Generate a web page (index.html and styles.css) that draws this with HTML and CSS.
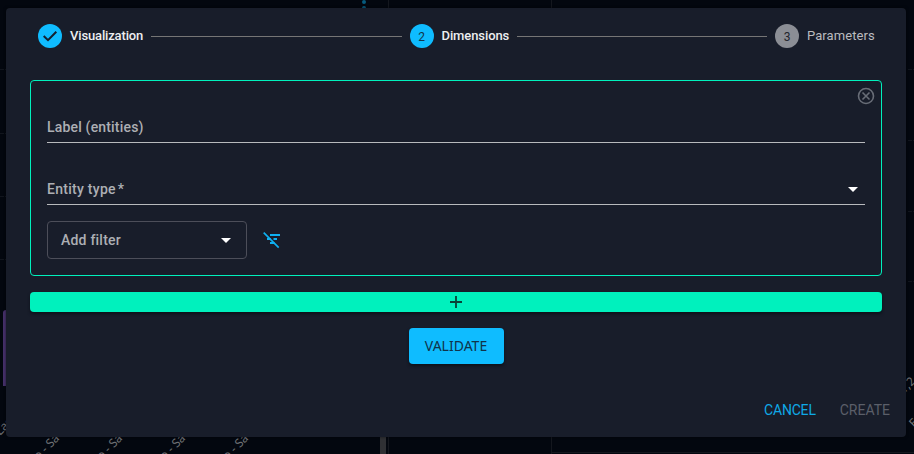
FILE: index.html
```
<!DOCTYPE html>
<html lang="en">
<head>
<meta charset="utf-8">
<title>Create widget</title>
<link rel="stylesheet" href="styles.css">
</head>
<body>
<div class="backdrop">
  <svg width="914" height="454" viewBox="0 0 914 454">
    <path d="M388.500 0V454M551.500 0V454M551 452.500H914" stroke="#14171e" fill="none"/>
    <path d="M0 69.500H6M0 133.500H6M0 196.500H6M0 259.500H6M908 69.500H914M908 140.500H914M908 211.500H914M908 281.500H914" stroke="#11151d" stroke-dasharray="4 1"/>
    <circle cx="364" cy="2" r="2" fill="#075a7d"/><circle cx="364" cy="8" r="2" fill="#075a7d"/>
    <path d="M3 386V313q0-3 3-3h3V386Z" fill="#46306b"/>
    <rect x="380" y="430" width="6" height="24" fill="#2f3034"/>
    <g class="axis">
      <text transform="translate(0 436) rotate(-45)">Las</text>
      <text transform="translate(34 465) rotate(-45)">llo - Sa</text>
      <text transform="translate(97 465) rotate(-45)">llo - Sa</text>
      <text transform="translate(160 465) rotate(-45)">llo - Sa</text>
      <text transform="translate(223 465) rotate(-45)">llo - Sa</text>
      <text transform="translate(904 394) rotate(-45)">1,2</text>
      <text transform="translate(914 428) rotate(-45)">E</text>
    </g>
  </svg>
</div>
<main class="dialog">
  <div class="stepper">
    <div class="step"><span class="dot"><svg width="24" height="24" viewBox="0 0 24 24"><path d="M5.700 12l4.300 4.100 8.300-8.400" fill="none" stroke="#14202e" stroke-width="2"/></svg></span><span class="step-label w1">Visualization</span></div>
    <i class="line"></i>
    <div class="step"><span class="dot">2</span><span class="step-label w2">Dimensions</span></div>
    <i class="line"></i>
    <div class="step idle"><span class="dot">3</span><span class="step-label w3">Parameters</span></div>
  </div>
  <section class="card">
    <button class="close" aria-label="Remove"><svg width="18" height="18" viewBox="0 0 18 18" fill="none" stroke="#686d77" stroke-width="1.600"><circle cx="9" cy="9" r="7.500"/><path d="M5.500 5.500l7 7M12.500 5.500l-7 7"/></svg></button>
    <div class="field"><span class="label-name">Label (entities)</span></div>
    <div class="field second"><span class="type-name">Entity type<span class="star">*</span></span><svg class="arrow" width="10" height="5" viewBox="0 0 10 5"><path d="M0 0h10L5 5Z" fill="#fff"/></svg></div>
    <div class="filters">
      <div class="select"><span>Add filter</span><svg width="10" height="5" viewBox="0 0 10 5"><path d="M0 0h10L5 5Z" fill="#fff"/></svg></div>
      <svg class="filter-off" width="17" height="17" viewBox="0 0 17 17" fill="none" stroke="#0fb0f0"><path d="M.7.700l15 15" stroke-width="1.700"/><path d="M7 3h10M4 7h3.800M10.500 7H14M7 11h4.500" stroke-width="2"/></svg>
    </div>
  </section>
  <button class="add" aria-label="Add"><svg width="12" height="12" viewBox="0 0 12 12"><path d="M6 0v12M0 6h12" stroke="#094237" stroke-width="1.800"/></svg></button>
  <button class="validate"><span>VALIDATE</span></button>
  <div class="actions"><button class="cancel">CANCEL</button><button class="create">CREATE</button></div>
</main>
</body>
</html>
```
FILE: styles.css
```
* { box-sizing: border-box; }
html, body { margin: 0; height: 100%; overflow: hidden; }
body { background: #03070f; color: #fff; font-family: Roboto, "Noto Sans", sans-serif; font-size: 14px; }
button { border: 0; padding: 0; background: none; font: inherit; }
svg { display: block; flex: none; }
.backdrop { position: absolute; inset: 0; }
.axis { fill: #707276; font-family: "Noto Sans", sans-serif; font-size: 12px; }
.dialog { position: relative; width: 900px; height: 429px; margin: 8px 0 0 6px; padding: 16px 24px 0; border-radius: 4px; background: #181d2a; box-shadow: 0 0 3px #0008; }
.stepper { display: flex; align-items: center; height: 24px; padding: 0 8px; }
.step { display: flex; align-items: center; gap: 8px; font-size: 13px; font-weight: 500; color: #eceef0; }
.step-label { margin-top: -2px; white-space: nowrap; }
.dot { display: flex; align-items: center; justify-content: center; width: 24px; height: 24px; border-radius: 50%; background: #0fbcff; color: #12364b; font-size: 12px; font-weight: 400; padding-top: 2px; }
.dot svg { margin-top: -2px; }
.idle { color: #babbbf; font-weight: 400; }
.idle .dot { background: #8b8e95; color: #22252d; }
.w1 { width: 73px; letter-spacing: -.15px; }
.w2 { width: 67px; letter-spacing: -.1px; }
.w3 { width: 67px; letter-spacing: .08px; }
.line { flex: 1; height: 1px; margin: 1px 8px 0; background: #757575; }
.card { position: relative; height: 196px; margin-top: 32px; padding: 30px 16px 0; border: 1px solid #00f1bd; border-radius: 4px; }
.close { position: absolute; top: 6px; right: 6px; }
.field { display: flex; align-items: center; justify-content: space-between; height: 32px; border-bottom: 1px solid #b8babd; color: #adafb4; font-weight: 500; }
.second { margin-top: 30px; }
.label-name { letter-spacing: .18px; }
.type-name { letter-spacing: .27px; }
.star { margin-left: 2px; }
.arrow { margin: 2px 7px 0 0; }
.filters { display: flex; align-items: center; gap: 16px; margin-top: 16px; }
.select { display: flex; align-items: center; justify-content: space-between; width: 200px; height: 38px; padding: 0 15px 0 13px; border: 1px solid #4c4e59; border-radius: 4px; color: #adafb4; font-weight: 500; letter-spacing: .22px; }
.add { display: flex; align-items: center; justify-content: center; width: 100%; height: 20px; margin-top: 16px; border-radius: 4px; background: #00f1bd; box-shadow: 0 2px 3px #0d111a; }
.validate { display: block; width: 95px; height: 36px; margin: 16px auto 0; padding-bottom: 2px; border-radius: 4px; background: #0fbcff; color: #10334a; box-shadow: 0 2px 3px #0d111a; font-family: "Noto Sans", sans-serif; }
.actions { display: flex; justify-content: flex-end; gap: 24px; margin: 38px -8px 0 0; line-height: 16px; }
.cancel { color: #0fa9e7; letter-spacing: -.2px; }
.create { color: #5b5f69; }
```
